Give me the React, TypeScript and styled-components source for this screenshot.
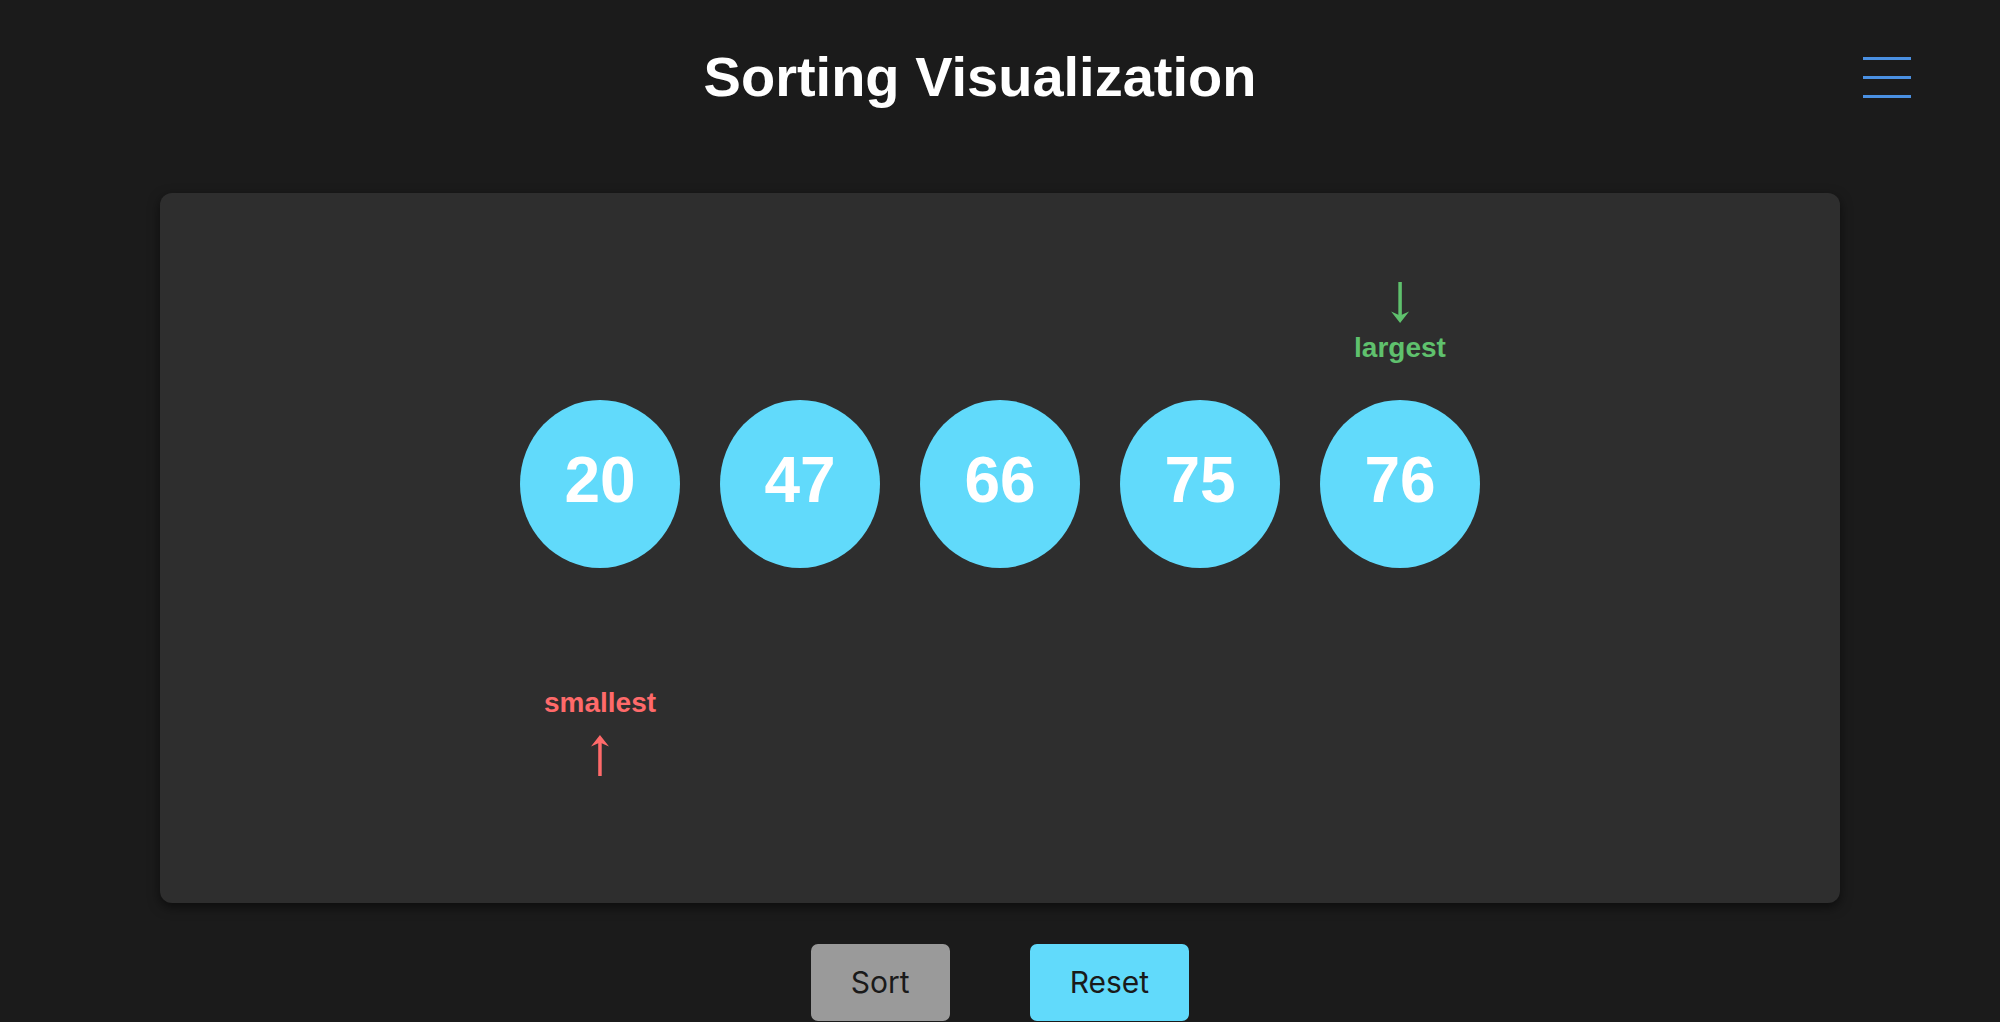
import React from "react";
import styled, { createGlobalStyle } from "styled-components";

const GlobalStyle = createGlobalStyle`
  html, body {
    margin: 0;
    padding: 0;
    background: #1b1b1b;
    font-family: "Liberation Sans", Arial, sans-serif;
    color: #ffffff;
  }
  * { box-sizing: border-box; }
`;

const Page = styled.div`
  min-height: 1022px;
  background: #1b1b1b;
`;

const Header = styled.header`
  height: 154px;
  padding-right: 40px;
  display: grid;
  grid-template-columns: 1fr auto 1fr;
  align-items: center;
`;

const Title = styled.h1`
  grid-column: 2;
  margin: 0;
  font-size: 56px;
  font-weight: 700;
  line-height: 64px;
  color: #ffffff;
  text-align: center;
`;

const Hamburger = styled.button`
  grid-column: 3;
  justify-self: end;
  margin-right: 49px;
  width: 48px;
  padding: 0;
  background: transparent;
  border: none;
  display: flex;
  flex-direction: column;
  gap: 16px;
  cursor: pointer;
`;

const HamburgerLine = styled.span`
  display: block;
  width: 48px;
  height: 3px;
  background: #4a90e2;
`;

const Main = styled.main`
  padding-top: 39px;
  display: flex;
  flex-direction: column;
  align-items: center;
`;

const Panel = styled.section`
  width: 1680px;
  height: 710px;
  background: #2e2e2e;
  border-radius: 12px;
  box-shadow: 0 4px 12px rgba(0, 0, 0, 0.55);
  display: flex;
  justify-content: center;
  align-items: flex-start;
  padding-top: 207px;
`;

const Row = styled.div`
  display: flex;
  gap: 40px;
`;

const Circle = styled.div`
  position: relative;
  width: 160px;
  height: 168px;
  border-radius: 50%;
  background: #61dafb;
  display: flex;
  align-items: center;
  justify-content: center;
  font-size: 64px;
  font-weight: 700;
  color: #ffffff;
  line-height: 1;
  padding-bottom: 8px;
`;

const Marker = styled.div<{ $kind: "largest" | "smallest" }>`
  position: absolute;
  left: 50%;
  transform: translateX(-50%);
  display: flex;
  flex-direction: ${(p) => (p.$kind === "largest" ? "column" : "column-reverse")};
  align-items: center;
  gap: ${(p) => (p.$kind === "largest" ? "7px" : "14px")};
  color: ${(p) => (p.$kind === "largest" ? "#5fc16d" : "#ff6a6a")};
  ${(p) =>
    p.$kind === "largest"
      ? "bottom: calc(100% + 36px);"
      : "top: calc(100% + 119px);"}
`;

const MarkerLabel = styled.span`
  font-size: 28px;
  font-weight: 700;
  line-height: 32px;
  white-space: nowrap;
`;

const Controls = styled.div`
  margin-top: 41px;
  display: flex;
  gap: 80px;
  justify-content: center;
`;

const Button = styled.button<{ $variant: "muted" | "primary" }>`
  border: none;
  border-radius: 7px;
  padding: 20px 40px;
  font-family: "Inter", "Liberation Sans", sans-serif;
  font-size: 30px;
  line-height: 37px;
  color: #1a1a1a;
  background: ${(p) => (p.$variant === "muted" ? "#9a9a9a" : "#61dafb")};
  cursor: pointer;
`;

const Arrow = ({ dir }: { dir: "up" | "down" }) => (
  <svg width="20" height="44" viewBox="0 0 20 44" fill="none">
    {dir === "down" ? (
      <>
        <line x1="10" y1="1" x2="10" y2="36" stroke="currentColor" strokeWidth="3.5" />
        <polygon points="1,30.5 10,42 19,30.5 10,34.5" fill="currentColor" />
      </>
    ) : (
      <>
        <line x1="10" y1="8" x2="10" y2="43" stroke="currentColor" strokeWidth="3.5" />
        <polygon points="1,13.5 10,2 19,13.5 10,9.5" fill="currentColor" />
      </>
    )}
  </svg>
);

const values = [20, 47, 66, 75, 76];

export default function App() {
  const min = Math.min(...values);
  const max = Math.max(...values);
  return (
    <Page>
      <GlobalStyle />
      <Header>
        <Title>Sorting Visualization</Title>
        <Hamburger aria-label="Menu">
          <HamburgerLine />
          <HamburgerLine />
          <HamburgerLine />
        </Hamburger>
      </Header>
      <Main>
        <Panel>
          <Row>
            {values.map((v) => (
              <Circle key={v}>
                {v}
                {v === max && (
                  <Marker $kind="largest">
                    <Arrow dir="down" />
                    <MarkerLabel>largest</MarkerLabel>
                  </Marker>
                )}
                {v === min && (
                  <Marker $kind="smallest">
                    <Arrow dir="up" />
                    <MarkerLabel>smallest</MarkerLabel>
                  </Marker>
                )}
              </Circle>
            ))}
          </Row>
        </Panel>
        <Controls>
          <Button $variant="muted">Sort</Button>
          <Button $variant="primary">Reset</Button>
        </Controls>
      </Main>
    </Page>
  );
}
